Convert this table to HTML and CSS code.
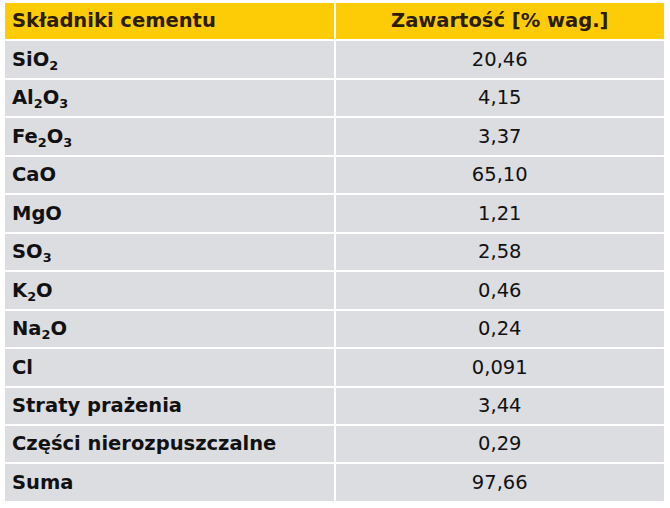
FILE: index.html
```html
<!DOCTYPE html>
<html lang="pl">
<head>
<meta charset="utf-8">
<title>Składniki cementu</title>
<link rel="stylesheet" href="styles.css">
</head>
<body>
<table class="tbl">
  <thead>
    <tr><th class="c-name">Składniki cementu</th><th class="c-val">Zawartość [% wag.]</th></tr>
  </thead>
  <tbody>
    <tr><td class="c-name">SiO<sub>2</sub></td><td class="c-val">20,46</td></tr>
    <tr><td class="c-name">Al<sub>2</sub>O<sub>3</sub></td><td class="c-val">4,15</td></tr>
    <tr><td class="c-name">Fe<sub>2</sub>O<sub>3</sub></td><td class="c-val">3,37</td></tr>
    <tr><td class="c-name">CaO</td><td class="c-val">65,10</td></tr>
    <tr><td class="c-name">MgO</td><td class="c-val">1,21</td></tr>
    <tr><td class="c-name">SO<sub>3</sub></td><td class="c-val">2,58</td></tr>
    <tr><td class="c-name">K<sub>2</sub>O</td><td class="c-val">0,46</td></tr>
    <tr><td class="c-name">Na<sub>2</sub>O</td><td class="c-val">0,24</td></tr>
    <tr><td class="c-name">Cl</td><td class="c-val">0,091</td></tr>
    <tr><td class="c-name">Straty prażenia</td><td class="c-val">3,44</td></tr>
    <tr><td class="c-name">Części nierozpuszczalne</td><td class="c-val">0,29</td></tr>
    <tr><td class="c-name">Suma</td><td class="c-val">97,66</td></tr>
  </tbody>
</table>
</body>
</html>
```
FILE: styles.css
```css
html, body {
  margin: 0;
  padding: 0;
  background: #ffffff;
}
body {
  font-family: "DejaVu Sans", Verdana, sans-serif;
  font-size: 19.5px;
  color: #111111;
}
.tbl {
  border-collapse: separate;
  border-spacing: 2px;
  margin: 1px 0 0 3px;
  width: 663px;
  table-layout: fixed;
}
.tbl th, .tbl td {
  height: 36.46px;
  padding: 0 7px;
  box-sizing: border-box;
  vertical-align: middle;
  line-height: 1;
}
.tbl th {
  background: #fdcc06;
  color: #2a1c05;
  font-weight: bold;
}
.tbl td {
  background: #dcdde0;
}
.c-name {
  text-align: left;
  font-weight: bold;
}
.c-val {
  text-align: center;
  font-weight: normal;
}
.tbl th.c-val {
  font-weight: bold;
}
sub {
  font-size: 0.66em;
  vertical-align: -0.3em;
  line-height: 0;
}
```
